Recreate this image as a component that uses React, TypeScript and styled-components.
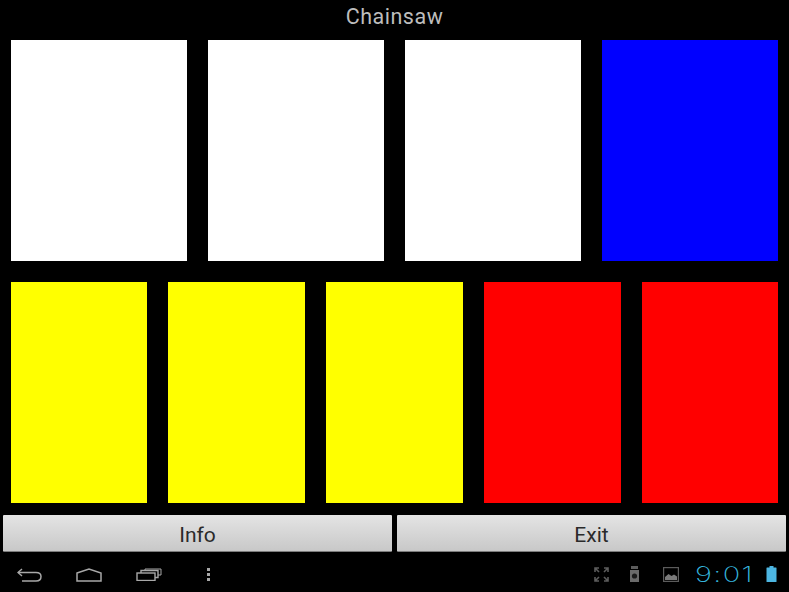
import React from "react";
import styled, { createGlobalStyle } from "styled-components";

const GlobalStyle = createGlobalStyle`
  html, body {
    margin: 0;
    padding: 0;
    background: #000;
  }
  body {
    font-family: Roboto, "Liberation Sans", sans-serif;
  }
`;

const Screen = styled.div`
  width: 789px;
  height: 592px;
  overflow: hidden;
  background: #000;
  display: flex;
  flex-direction: column;
`;

const Title = styled.div`
  height: 40px;
  padding-bottom: 8px;
  box-sizing: border-box;
  display: flex;
  align-items: center;
  justify-content: center;
  color: #bdbdbd;
  font-size: 21.5px;
  letter-spacing: 0.5px;
`;

const CardRow = styled.div<{ $columns: string }>`
  display: grid;
  grid-template-columns: ${(p) => p.$columns};
  column-gap: 21px;
  height: 221px;
  padding: 0 11px;
  margin-bottom: 21px;
`;

const Card = styled.div<{ $color: string }>`
  background: ${(p) => p.$color};
`;

const ButtonRow = styled.div`
  display: grid;
  grid-template-columns: 1fr 1fr;
  column-gap: 5px;
  height: 37px;
  padding: 0 3px;
  margin-top: -9px;
`;

const ActionButton = styled.button`
  border: 0;
  border-bottom: 1px solid #7c7c7c;
  border-radius: 1px;
  padding: 3px 0 0;
  background: linear-gradient(#e4e4e4, #c8c8c8);
  color: #2a2a2a;
  font-family: Roboto, "Liberation Sans", sans-serif;
  font-size: 21px;
`;

const NavBar = styled.div`
  flex: 1;
  display: flex;
  align-items: center;
  justify-content: space-between;
  padding: 5px 12px 0 17px;
`;

const NavGroup = styled.div`
  display: grid;
  grid-template-columns: 59px 60px 70px 5px;
  align-items: center;
`;

const StatusGroup = styled.div`
  display: grid;
  grid-template-columns: 35px 34px 32px 71px 11px;
  align-items: center;
  margin-top: -1px;
`;

const Clock = styled.span`
  display: inline-block;
  color: #35b4dc;
  font-family: Inter, Roboto, sans-serif;
  font-weight: 200;
  font-size: 21px;
  line-height: 1;
  letter-spacing: 1px;
  transform: scaleX(1.38);
  transform-origin: left center;
`;

const BackIcon = () => (
  <svg width="25" height="14" viewBox="0 0 25 14" fill="none" stroke="#a8a8a8" strokeWidth="1.5">
    <path d="M5 1 L1 4.5 L5 8" />
    <path d="M1 4.5 H19 Q24 4.5 24 8.5 Q24 13 19 13 H5" />
  </svg>
);

const HomeIcon = () => (
  <svg width="26" height="14" viewBox="0 0 26 14" fill="none" stroke="#a8a8a8" strokeWidth="1.5">
    <path d="M1 5 L13 1 L25 5 V13 H1 Z" />
  </svg>
);

const RecentIcon = () => (
  <svg width="26" height="13" viewBox="0 0 26 13" fill="none" stroke="#a8a8a8" strokeWidth="1.4">
    <rect x="1" y="5" width="18" height="7.5" />
    <path d="M5 5 V2.5 H22 V9.5 H19" />
    <path d="M9 2.5 V1 H25 V7 H22" strokeWidth="1" />
  </svg>
);

const MenuIcon = () => (
  <svg width="5" height="13" viewBox="0 0 5 13" fill="#a8a8a8">
    <rect x="1" y="0" width="3" height="3" />
    <rect x="1" y="5" width="3" height="3" />
    <rect x="1" y="10" width="3" height="3" />
  </svg>
);

const ExpandIcon = () => (
  <svg width="15" height="15" viewBox="0 0 15 15" fill="none" stroke="#5c5c5c" strokeWidth="1.6">
    <path d="M1 5 V1 H5 M1 1 L5 5" />
    <path d="M14 5 V1 H10 M14 1 L10 5" />
    <path d="M1 10 V14 H5 M1 14 L5 10" />
    <path d="M14 10 V14 H10 M14 14 L10 10" />
  </svg>
);

const SdIcon = () => (
  <svg width="11" height="16" viewBox="0 0 11 16">
    <path d="M2 0 H9 V3 H2 Z" fill="#5c5c5c" />
    <path d="M1 4 H10 V16 H1 Z" fill="#6a6a6a" />
    <circle cx="5.5" cy="10" r="2.6" fill="#1a1a1a" />
  </svg>
);

const PictureIcon = () => (
  <svg width="16" height="15" viewBox="0 0 16 15">
    <rect x="0.6" y="0.6" width="14.8" height="13.8" fill="none" stroke="#5c5c5c" strokeWidth="1.2" />
    <path d="M2 13 V10 L5.5 7 L8.5 9 L11 7.5 L14 9.5 V13 Z" fill="#7a7a7a" />
  </svg>
);

const BatteryIcon = () => (
  <svg width="11" height="16" viewBox="0 0 11 16" fill="#4db6e2">
    <rect x="3.5" y="0" width="4" height="2" />
    <rect x="0.5" y="1.5" width="10" height="14.5" rx="0.5" />
  </svg>
);

const App = () => (
  <Screen>
    <GlobalStyle />
    <Title>Chainsaw</Title>
    <CardRow $columns="176px 176px 176px 176px">
      <Card $color="#fff" />
      <Card $color="#fff" />
      <Card $color="#fff" />
      <Card $color="#00f" />
    </CardRow>
    <CardRow $columns="136px 137px 137px 137px 136px">
      <Card $color="#ff0" />
      <Card $color="#ff0" />
      <Card $color="#ff0" />
      <Card $color="#f00" />
      <Card $color="#f00" />
    </CardRow>
    <ButtonRow>
      <ActionButton>Info</ActionButton>
      <ActionButton>Exit</ActionButton>
    </ButtonRow>
    <NavBar>
      <NavGroup>
        <BackIcon />
        <HomeIcon />
        <RecentIcon />
        <MenuIcon />
      </NavGroup>
      <StatusGroup>
        <ExpandIcon />
        <SdIcon />
        <PictureIcon />
        <Clock>9:01</Clock>
        <BatteryIcon />
      </StatusGroup>
    </NavBar>
  </Screen>
);

export default App;
